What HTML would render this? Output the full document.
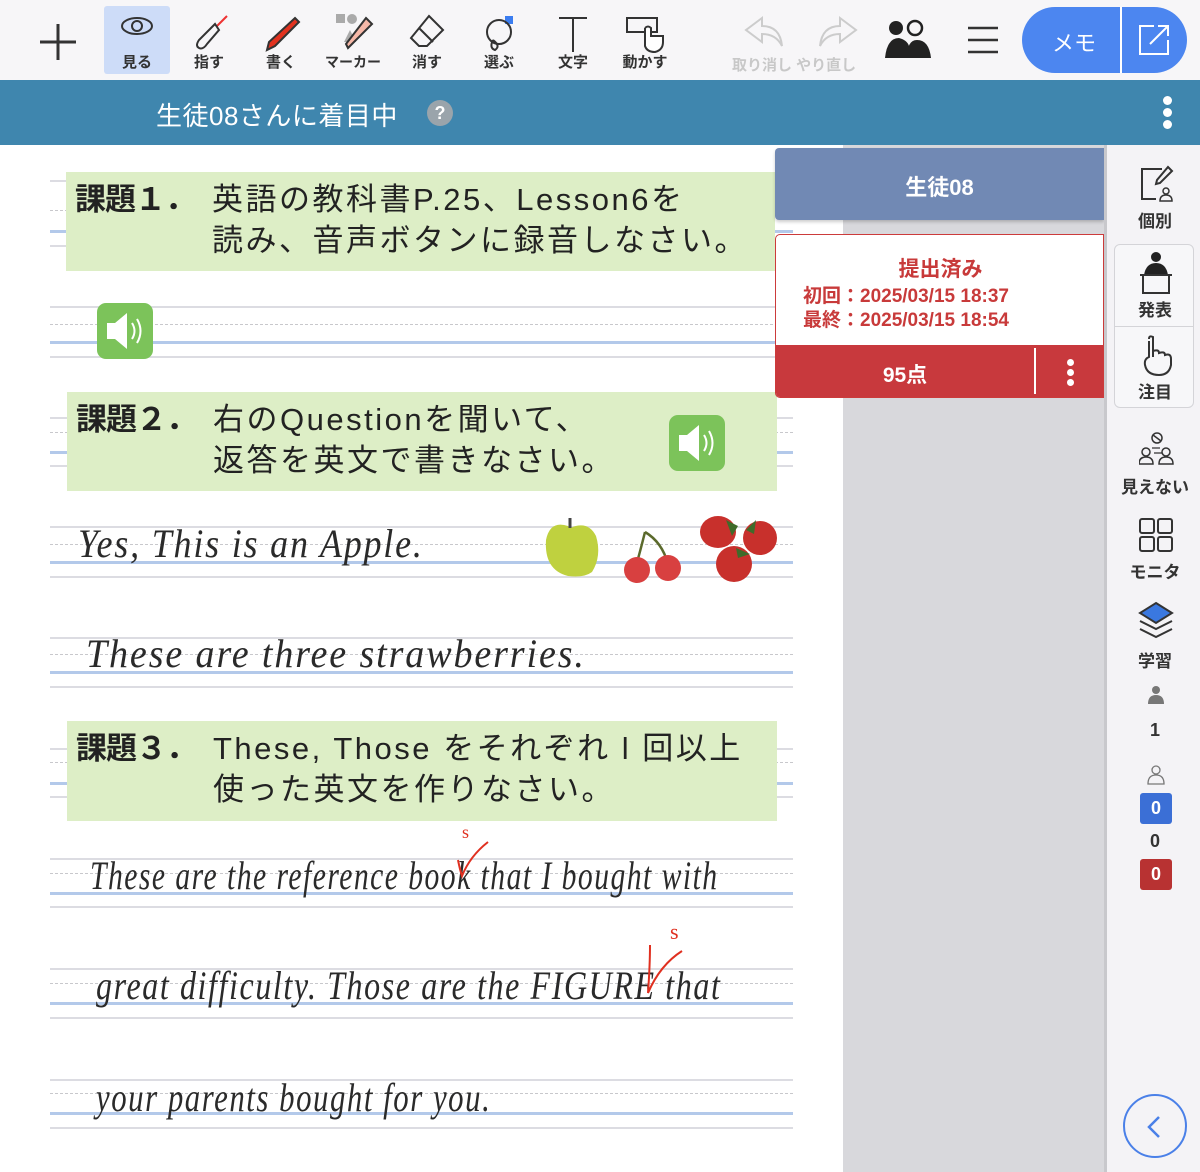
<!DOCTYPE html>
<html><head><meta charset="utf-8"><style>
*{margin:0;padding:0;box-sizing:border-box}
body{width:1200px;height:1172px;position:relative;overflow:hidden;background:#fff;font-family:"Liberation Sans","Noto Sans CJK JP",sans-serif}
.a{position:absolute}
.tb{left:0;top:0;width:1200px;height:80px;background:#f7f6f8}
.tool{position:absolute;top:6px;width:66px;height:68px;text-align:center}
.tool .lb{position:absolute;bottom:2px;left:0;right:0;font-size:15px;font-weight:bold;color:#333}
.tool svg{position:absolute;left:50%;transform:translateX(-50%);top:8px}
.ln{position:absolute;left:50px;width:743px;height:0}
.g{border-top:2px solid #dcdce2}
.d{border-top:1px dashed #c8c8cc}
.b{border-top:3px solid #b3c9ea}
.task{position:absolute;background:#ddeec6;font-size:31px;color:#222;line-height:41px}
.task .h{position:absolute;left:9px;top:7px;font-weight:bold;letter-spacing:-1px}
.task .t{position:absolute;left:146px;top:7px;letter-spacing:2.5px}
.hw{position:absolute;font-family:"Liberation Serif",serif;font-style:italic;font-size:40px;color:#2a2a2a;transform-origin:left bottom;white-space:nowrap;font-weight:normal;letter-spacing:2px}
.spk{position:absolute;width:56px;height:56px;background:#7cc35a;border-radius:9px}
.sb{position:absolute;left:1104px;top:145px;width:96px;height:1027px;background:#f4f3f6;border-left:3px solid #c8c8cc}
.si{position:absolute;left:0;width:96px;text-align:center;font-size:17px;font-weight:bold;color:#333}
</style></head><body>

<div class="a tb"></div>
<svg class="a" style="left:38px;top:22px" width="40" height="40"><path d="M20 2V38M2 20H38" stroke="#333" stroke-width="3"/></svg>
<div class="tool" style="left:104px;background:#cddcf8;border-radius:3px"><svg width="34" height="24"><ellipse cx="17" cy="12" rx="15" ry="8" fill="none" stroke="#333" stroke-width="2"/><circle cx="17" cy="12" r="5" fill="none" stroke="#333" stroke-width="2"/></svg><div class="lb">見る</div></div>
<div class="tool" style="left:176px"><svg width="40" height="38"><path d="M38 2L28 12" stroke="#e33" stroke-width="2"/><path d="M26 10L10 26Q6 32 10 34Q14 36 18 30L30 16Z" fill="none" stroke="#333" stroke-width="2"/></svg><div class="lb">指す</div></div>
<div class="tool" style="left:248px"><svg width="40" height="38"><path d="M34 4L38 8L14 32L6 36L8 28Z" fill="#e2321f" stroke="#333" stroke-width="2"/></svg><div class="lb">書く</div></div>
<div class="tool" style="left:320px"><svg width="50" height="38"><rect x="8" y="0" width="9" height="9" fill="#aaa"/><circle cx="24" cy="5" r="5" fill="#aaa"/><path d="M16 28L22 16L28 28Z" fill="#aaa"/><path d="M38 4L44 10L26 28L20 34L18 30Z" fill="#f6b8a8" stroke="#333" stroke-width="2"/></svg><div class="lb" style="font-size:14px;left:-4px;right:-4px">マーカー</div></div>
<div class="tool" style="left:394px"><svg width="40" height="38"><path d="M22 2L36 16L20 32H12L4 24Z" fill="none" stroke="#333" stroke-width="2"/><path d="M12 14L26 28" stroke="#333" stroke-width="2"/></svg><div class="lb">消す</div></div>
<div class="tool" style="left:466px"><svg width="40" height="38"><rect x="26" y="2" width="8" height="8" fill="#3b7df0"/><circle cx="20" cy="18" r="12" fill="none" stroke="#333" stroke-width="2"/><path d="M14 26Q10 34 16 36Q22 32 14 26" fill="none" stroke="#333" stroke-width="2"/></svg><div class="lb">選ぶ</div></div>
<div class="tool" style="left:540px"><svg width="40" height="38"><path d="M6 4H34M20 4V38" stroke="#333" stroke-width="2"/></svg><div class="lb">文字</div></div>
<div class="tool" style="left:612px"><svg width="44" height="40"><rect x="4" y="4" width="30" height="14" fill="none" stroke="#333" stroke-width="2"/><path d="M22 14V32Q24 38 32 38Q40 36 40 28V22L28 22V14Q25 11 22 14" fill="#fff" stroke="#333" stroke-width="2"/></svg><div class="lb">動かす</div></div>
<svg class="a" style="left:742px;top:16px" width="44" height="32"><path d="M20 2L4 14L20 26V18Q34 18 40 30Q38 10 20 10Z" fill="none" stroke="#ccc" stroke-width="2"/></svg>
<svg class="a" style="left:816px;top:16px" width="44" height="32"><path d="M24 2L40 14L24 26V18Q10 18 4 30Q6 10 24 10Z" fill="none" stroke="#ccc" stroke-width="2"/></svg>
<div class="a" style="left:732px;top:54px;font-size:15px;font-weight:bold;color:#c8c8c8">取り消し やり直し</div>
<svg class="a" style="left:885px;top:18px" width="50" height="42"><circle cx="11" cy="10" r="7" fill="#222"/><path d="M0 40Q2 20 14 20Q22 22 24 28V40Z" fill="#222"/><circle cx="30" cy="10" r="7" fill="none" stroke="#222" stroke-width="2.5"/><path d="M22 40Q22 22 32 22Q44 22 46 40Z" fill="#222"/></svg>
<svg class="a" style="left:966px;top:26px" width="34" height="28"><path d="M2 2H32M2 14H32M2 26H32" stroke="#333" stroke-width="2.5"/></svg>
<div class="a" style="left:1022px;top:7px;width:165px;height:66px;border-radius:33px;background:#4c86f0"></div>
<div class="a" style="left:1120px;top:7px;width:2px;height:66px;background:#fff"></div>
<div class="a" style="left:1052px;top:26px;font-size:22px;color:#fff">メモ</div>
<svg class="a" style="left:1136px;top:22px" width="36" height="36"><path d="M18 4H4V32H32V18" fill="none" stroke="#fff" stroke-width="2"/><path d="M14 22L32 4M22 4H32V14" fill="none" stroke="#fff" stroke-width="2"/></svg>

<div class="a" style="left:0;top:80px;width:1200px;height:65px;background:#3f86ae"></div>
<div class="a" style="left:156px;top:96px;font-size:26px;color:#fff;letter-spacing:0.5px">生徒08さんに着目中</div>
<div class="a" style="left:427px;top:100px;width:26px;height:26px;border-radius:50%;background:#9aa4ab;color:#fff;font-weight:bold;font-size:18px;text-align:center;line-height:26px">?</div>
<div class="a" style="left:1163px;top:96px;width:9px;height:9px;border-radius:50%;background:#fff;box-shadow:0 12px 0 #fff,0 24px 0 #fff"></div>

<div class="a" style="left:843px;top:145px;width:261px;height:1027px;background:#d8d8dc"></div>

<div class="ln g" style="top:180px"></div><div class="ln d" style="top:210px"></div><div class="ln b" style="top:230px"></div><div class="ln g" style="top:245px"></div>
<div class="ln g" style="top:306px"></div><div class="ln d" style="top:324px"></div><div class="ln b" style="top:341px"></div><div class="ln g" style="top:356px"></div>
<div class="ln g" style="top:417px"></div><div class="ln d" style="top:432px"></div><div class="ln b" style="top:451px"></div><div class="ln g" style="top:465px"></div>
<div class="ln g" style="top:526px"></div><div class="ln d" style="top:544px"></div><div class="ln b" style="top:561px"></div><div class="ln g" style="top:576px"></div>
<div class="ln g" style="top:637px"></div><div class="ln d" style="top:654px"></div><div class="ln b" style="top:671px"></div><div class="ln g" style="top:686px"></div>
<div class="ln g" style="top:748px"></div><div class="ln d" style="top:762px"></div><div class="ln b" style="top:782px"></div><div class="ln g" style="top:796px"></div>
<div class="ln g" style="top:858px"></div><div class="ln d" style="top:873px"></div><div class="ln b" style="top:892px"></div><div class="ln g" style="top:906px"></div>
<div class="ln g" style="top:968px"></div><div class="ln d" style="top:983px"></div><div class="ln b" style="top:1002px"></div><div class="ln g" style="top:1017px"></div>
<div class="ln g" style="top:1079px"></div><div class="ln d" style="top:1093px"></div><div class="ln b" style="top:1112px"></div><div class="ln g" style="top:1127px"></div>

<div class="task" style="left:66px;top:172px;width:709px;height:99px"><span class="h">課題１．</span><span class="t">英語の教科書P.25、Lesson6を<br>読み、音声ボタンに録音しなさい。</span></div>
<div class="task" style="left:67px;top:392px;width:710px;height:99px"><span class="h">課題２．</span><span class="t">右のQuestionを聞いて、<br>返答を英文で書きなさい。</span></div>
<div class="task" style="left:67px;top:721px;width:710px;height:100px"><span class="h">課題３．</span><span class="t">These, Those をそれぞれ l 回以上<br>使った英文を作りなさい。</span></div>

<div class="spk" style="left:97px;top:303px"><svg width="56" height="56"><path d="M10 20H18L30 10V46L18 36H10Z" fill="#fff"/><path d="M35 20Q40 28 35 36M40 16Q47 28 40 40" fill="none" stroke="#fff" stroke-width="2"/></svg></div>
<div class="spk" style="left:669px;top:415px"><svg width="56" height="56"><path d="M10 20H18L30 10V46L18 36H10Z" fill="#fff"/><path d="M35 20Q40 28 35 36M40 16Q47 28 40 40" fill="none" stroke="#fff" stroke-width="2"/></svg></div>

<div class="hw" style="left:78px;top:520px;transform:scaleX(0.9)">Yes, This is an Apple.</div>
<div class="hw" style="left:86px;top:630px;transform:scaleX(0.95)">These are three strawberries.</div>
<div class="hw" style="left:90px;top:852px;transform:scaleX(0.74)">These are the reference book that I bought with</div>
<div class="hw" style="left:96px;top:962px;transform:scaleX(0.8)">great difficulty. Those are the FIGURE that</div>
<div class="hw" style="left:96px;top:1074px;transform:scaleX(0.77)">your parents bought for you.</div>
<svg class="a" style="left:450px;top:820px" width="60" height="60"><path d="M8 40Q10 50 12 56Q20 36 38 22" fill="none" stroke="#e03020" stroke-width="2"/><text x="12" y="18" font-size="18" fill="#e03020" font-family="Liberation Serif">s</text></svg>
<svg class="a" style="left:640px;top:915px" width="60" height="90"><path d="M10 30Q10 50 8 78Q20 50 42 36" fill="none" stroke="#e03020" stroke-width="2"/><text x="30" y="24" font-size="22" fill="#e03020" font-family="Liberation Serif">s</text></svg>

<svg class="a" style="left:540px;top:512px" width="240" height="75">
<path d="M28 14Q10 8 6 28Q4 58 28 64Q44 66 52 60Q62 44 56 24Q48 8 30 16Z" fill="#bfd13f"/>
<path d="M30 16V6" stroke="#444" stroke-width="3"/>
<path d="M105 20Q100 40 96 54M105 20Q122 30 128 52" stroke="#5b6a2c" stroke-width="2.5" fill="none"/>
<circle cx="97" cy="58" r="13" fill="#d84040"/><circle cx="128" cy="56" r="13" fill="#d84040"/>
<ellipse cx="178" cy="20" rx="18" ry="16" fill="#c8302c"/><ellipse cx="220" cy="26" rx="17" ry="17" fill="#c8302c"/><ellipse cx="194" cy="52" rx="18" ry="18" fill="#c8302c"/>
<path d="M186 8L198 14L192 24ZM206 18L216 8L214 22ZM196 36L210 42L198 46Z" fill="#3f6b2a"/>
</svg>

<div class="a" style="left:775px;top:148px;width:329px;height:72px;background:#7189b4;border-radius:4px 0 0 4px;box-shadow:0 2px 3px rgba(0,0,0,.2)"></div>
<div class="a" style="left:775px;top:170px;width:329px;text-align:center;font-size:22px;font-weight:bold;color:#fff">生徒08</div>
<div class="a" style="left:775px;top:234px;width:329px;height:164px;background:#fff;border:1px solid #cc3b3b;border-radius:5px 0 0 5px;overflow:hidden">
<div class="a" style="left:0;top:18px;width:329px;text-align:center;font-size:21px;font-weight:bold;color:#c83a3a">提出済み</div>
<div class="a" style="left:27px;top:50px;font-size:19px;font-weight:bold;color:#c83a3a;line-height:24px">初回：2025/03/15 18:37<br>最終：2025/03/15 18:54</div>
<div class="a" style="left:0;top:110px;width:329px;height:54px;background:#c8393d"></div>
<div class="a" style="left:258px;top:113px;width:2px;height:46px;background:#fff"></div>
<div class="a" style="left:0;top:124px;width:258px;text-align:center;font-size:21px;font-weight:bold;color:#fff">95点</div>
<div class="a" style="left:291px;top:124px;width:7px;height:7px;border-radius:50%;background:#fff;box-shadow:0 10px 0 #fff,0 20px 0 #fff"></div>
</div>

<div class="sb">
<svg class="a" style="left:33px;top:20px" width="34" height="38"><path d="M22 4H2V34H16" fill="none" stroke="#333" stroke-width="2"/><path d="M28 2L32 6L20 18L16 19L17 15Z" fill="none" stroke="#333" stroke-width="2"/><circle cx="26" cy="26" r="3" fill="none" stroke="#333" stroke-width="1.5"/><path d="M20 36Q20 30 26 30Q32 30 32 36Z" fill="none" stroke="#333" stroke-width="1.5"/></svg>
<div class="si" style="top:62px">個別</div>
<div class="a" style="left:7px;top:99px;width:80px;height:164px;border:1px solid #d4d4d8;border-radius:6px;background:#f7f7f9"></div>
<div class="a" style="left:7px;top:181px;width:80px;height:1px;background:#d4d4d8"></div>
<svg class="a" style="left:31px;top:106px" width="36" height="44"><circle cx="18" cy="6" r="5" fill="#222"/><path d="M6 24Q8 12 18 12Q28 12 30 24Z" fill="#222"/><path d="M2 24H34M5 24V42H31V24" fill="none" stroke="#333" stroke-width="2"/></svg>
<div class="si" style="top:151px">発表</div>
<svg class="a" style="left:34px;top:190px" width="32" height="42"><path d="M8 4Q8 0 12 2V22M12 16Q18 14 18 18Q24 16 24 20Q30 18 30 24V30Q28 40 18 40Q6 40 4 30Q3 24 8 22V6" fill="none" stroke="#333" stroke-width="2"/></svg>
<div class="si" style="top:233px">注目</div>
<svg class="a" style="left:32px;top:287px" width="36" height="34"><circle cx="18" cy="6" r="5" fill="none" stroke="#333" stroke-width="1.5"/><path d="M14 3L22 9" stroke="#333" stroke-width="1.5"/><circle cx="7" cy="20" r="4" fill="none" stroke="#333" stroke-width="1.5"/><circle cx="27" cy="20" r="4" fill="none" stroke="#333" stroke-width="1.5"/><path d="M0 32Q0 25 7 25Q14 25 14 32ZM20 32Q20 25 27 25Q34 25 34 32Z" fill="none" stroke="#333" stroke-width="1.5"/><path d="M13 16H21M15 21H23" stroke="#333" stroke-width="1.2"/></svg>
<div class="si" style="top:328px">見えない</div>
<svg class="a" style="left:32px;top:373px" width="34" height="34"><rect x="1" y="1" width="14" height="14" rx="2" fill="none" stroke="#333" stroke-width="2"/><rect x="19" y="1" width="14" height="14" rx="2" fill="none" stroke="#333" stroke-width="2"/><rect x="1" y="19" width="14" height="14" rx="2" fill="none" stroke="#333" stroke-width="2"/><rect x="19" y="19" width="14" height="14" rx="2" fill="none" stroke="#333" stroke-width="2"/></svg>
<div class="si" style="top:413px">モニタ</div>
<svg class="a" style="left:31px;top:456px" width="36" height="40"><path d="M2 20L18 28L34 20M2 28L18 36L34 28" fill="none" stroke="#333" stroke-width="2"/><path d="M18 2L34 12L18 22L2 12Z" fill="#3a78e0" stroke="#333" stroke-width="2"/></svg>
<div class="si" style="top:502px">学習</div>
<svg class="a" style="left:40px;top:540px" width="18" height="20"><circle cx="9" cy="5" r="4" fill="#777"/><path d="M1 19Q1 10 9 10Q17 10 17 19Z" fill="#777"/></svg>
<div class="si" style="top:575px;font-size:18px">1</div>
<svg class="a" style="left:40px;top:620px" width="18" height="20"><circle cx="9" cy="5" r="4" fill="none" stroke="#777" stroke-width="1.3"/><path d="M1 19Q1 10 9 10Q17 10 17 19Z" fill="none" stroke="#777" stroke-width="1.3"/></svg>
<div class="a" style="left:33px;top:648px;width:32px;height:31px;background:#3b6fd6;border-radius:3px;color:#fff;font-weight:bold;font-size:18px;text-align:center;line-height:31px">0</div>
<div class="si" style="top:686px;font-size:18px">0</div>
<div class="a" style="left:33px;top:714px;width:32px;height:31px;background:#b83232;border-radius:3px;color:#fff;font-weight:bold;font-size:18px;text-align:center;line-height:31px">0</div>
<div class="a" style="left:16px;top:949px;width:64px;height:64px;border:2px solid #4a80e8;border-radius:50%"></div>
<svg class="a" style="left:38px;top:968px" width="20" height="28"><path d="M14 4L4 14L14 24" fill="none" stroke="#4a80e8" stroke-width="2.5"/></svg>
</div>
</body></html>
